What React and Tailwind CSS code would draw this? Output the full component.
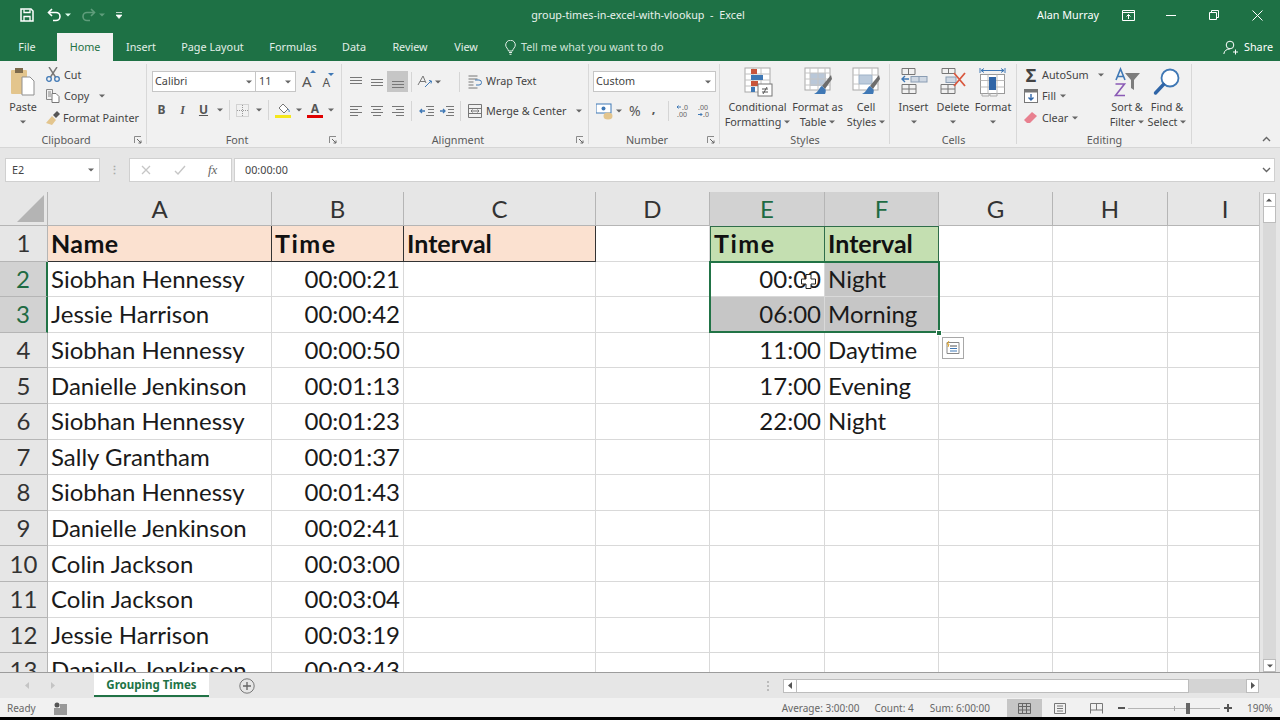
import React from "react";

const Caret = ({ c = "#666", className = "" }) => (
  <svg width="6" height="4" viewBox="0 0 6 4" className={className}><path d="M0 0.5h6L3 3.5z" fill={c} /></svg>
);

const Launcher = () => (
  <svg width="8" height="8" viewBox="0 0 8 8"><path d="M0.5 7V0.5H7" fill="none" stroke="#8a8a8a" /><path d="M3 3l4 4M7 4.5V7H4.5" fill="none" stroke="#666" /></svg>
);

const Sep = ({ h = "h-[20px]" }) => <div className={`w-px ${h} bg-[#d5d5d5]`} />;

const Group = ({ w, label, launcher, children, pad = "" }) => (
  <div className={`${w} shrink-0 h-[86px] flex flex-col relative`}>
    <div className={`h-[71px] flex ${pad}`}>{children}</div>
    <div className={`h-[15px] pt-[1px] flex items-center justify-center text-[10.8px] leading-none text-[#5a5a5a] relative ${launcher ? "pr-[15px]" : ""}`}>
      {label}
      {launcher && <span className="absolute right-[5px] top-[4px] flex"><Launcher /></span>}
    </div>
    <div className="absolute right-0 top-[3px] bottom-[3px] w-px bg-[#d8d8d8]" />
  </div>
);

const Big = ({ w, icon, l1, l2, caretOnly, caret2 }) => (
  <div className={`${w} shrink-0 flex flex-col items-center`}>
    <div className="h-[38px] pt-[6px] flex justify-center">{icon}</div>
    <div className="h-[15px] leading-[15px] whitespace-nowrap">{l1}</div>
    <div className="h-[15px] flex items-center justify-center gap-[3px] whitespace-nowrap">
      {l2 && <span className="leading-[15px]">{l2}</span>}
      {(caretOnly || caret2) && <Caret />}
    </div>
  </div>
);

const Lines = ({ ws, h = 3 }) => (
  <svg width="14" height="12" viewBox="0 0 14 12">
    {ws.map((x, i) => <path key={i} d={`M${x[0]} ${i * h + 1.5}H${x[1]}`} stroke="#777" strokeWidth="1" />)}
  </svg>
);

const CondIcon = () => (
  <svg width="30" height="30" viewBox="0 0 30 30">
    <rect x="2" y="1" width="25" height="24" fill="#fff" stroke="#a9a9a9" />
    <path d="M2 7h25M2 13h25M2 19h25M10 1v24M18 1v24" stroke="#c0c0c0" />
    <rect x="8" y="2" width="6" height="5" fill="#c9553b" /><rect x="8" y="8" width="12" height="5" fill="#3f78b5" />
    <rect x="8" y="14" width="7" height="5" fill="#c9553b" /><rect x="8" y="20" width="4" height="5" fill="#3f78b5" />
    <rect x="15" y="17" width="14" height="12" fill="#fff" stroke="#777" />
    <path d="M19 22h6M19 25h6M24 20l-4 7" stroke="#555" />
  </svg>
);
const TableIcon = () => (
  <svg width="30" height="30" viewBox="0 0 30 30">
    <rect x="2" y="1" width="25" height="22" fill="#fff" stroke="#a9a9a9" />
    <rect x="7" y="6" width="16" height="13" fill="#b9c7d8" />
    <path d="M2 6h25M2 12h25M2 18h25M7 1v22M15 1v22M22 1v22" stroke="#c4c4c4" />
    <path d="M28 8l-9 11 3 3 7-10z" fill="#6d6d6d" /><path d="M19 19c-3 1-3 6-8 8h11c1-2 1-5 0-5z" fill="#3f78b5" />
  </svg>
);
const StylesIcon = () => (
  <svg width="30" height="30" viewBox="0 0 30 30">
    <rect x="2" y="1" width="25" height="22" fill="#fff" stroke="#a9a9a9" />
    <rect x="8" y="8" width="13" height="9" fill="#bccbdc" stroke="#9fb3c8" />
    <path d="M2 8h6M21 8h6M2 17h6M21 17h6M8 1v7M21 1v7M8 17v6M21 17v6" stroke="#c4c4c4" />
    <path d="M28 8l-9 11 3 3 7-10z" fill="#6d6d6d" /><path d="M19 19c-3 1-3 6-8 8h11c1-2 1-5 0-5z" fill="#3f78b5" />
  </svg>
);
const InsertIcon = () => (
  <svg width="28" height="30" viewBox="0 0 28 30" fill="none">
    <path d="M2 1.500h13v6H2zM8.500 1.500v6M2 17.500h14v9H2zM9 17.500v9M2 22h14" stroke="#777" />
    <rect x="11" y="9.500" width="16" height="5.500" fill="#cfd8e3" stroke="#8a9db3" /><path d="M19 9.500v5.500" stroke="#8a9db3" />
    <path d="M9 12H2M5 9l-3 3 3 3" stroke="#3f78b5" strokeWidth="1.400" />
  </svg>
);
const DeleteIcon = () => (
  <svg width="30" height="30" viewBox="0 0 30 30" fill="none">
    <path d="M4 1.500h13v5H4zM10.500 1.500v5M3 17.500h14v9H3zM10 17.500v9M3 22h14" stroke="#777" />
    <rect x="8" y="10" width="10" height="5.500" fill="#cfd8e3" stroke="#8a9db3" />
    <path d="M16 6l11 13M27 6L16 19" stroke="#d9583f" strokeWidth="1.800" />
  </svg>
);
const FormatIcon = () => (
  <svg width="28" height="30" viewBox="0 0 28 30" fill="none">
    <path d="M1 1v5M26 1v5M2 3.500h23M2 3.500l3-2M2 3.500l3 2M25 3.500l-3-2M25 3.500l-3 2" stroke="#3f78b5" />
    <rect x="1.500" y="7.500" width="24" height="19" fill="#fff" stroke="#999" />
    <path d="M1.500 13.500h24M1.500 20h24M9 7.500v19M18 7.500v19" stroke="#bbb" />
    <rect x="10" y="10" width="7" height="13" fill="#2f65a7" />
    <path d="M3 26v3h7v-3M11 26v3h7v-3" stroke="#aaa" />
  </svg>
);
const SortIcon = () => (
  <svg width="30" height="32" viewBox="0 0 30 32" fill="none">
    <path d="M4 13l4.500-11L13 13M5.500 9.500h6" stroke="#3f78b5" strokeWidth="1.600" />
    <path d="M3.500 17h9l-9 11.500h9.500" stroke="#8a5ab5" strokeWidth="1.600" />
    <path d="M13 6h15l-6 7v10l-3-2v-8z" fill="#7d7d7d" />
  </svg>
);
const FindIcon = () => (
  <svg width="30" height="32" viewBox="0 0 30 32" fill="none">
    <circle cx="18" cy="11" r="8.500" stroke="#3f78b5" strokeWidth="1.800" fill="#fff" />
    <path d="M11.500 17.500L3.500 26" stroke="#2f65a7" strokeWidth="3.400" strokeLinecap="round" />
  </svg>
);

const TITLE = "font-['Noto_Sans','Open_Sans',sans-serif]";

function TitleBar() {
  return (
    <div className="h-[30px] flex items-center text-white text-[10.8px] shrink-0">
      <div className="w-[529px] flex items-center">
        <svg className="ml-[20px]" width="14" height="14" viewBox="0 0 14 14" fill="none"><path d="M1 1h10l2 2v10H1z" stroke="#fff" strokeWidth="1.500" /><path d="M4 1.500v3h6v-3M4 13V8.500h6V13" stroke="#fff" strokeWidth="1.300" /></svg>
        <svg className="ml-[13px]" width="15" height="14" viewBox="0 0 15 14" fill="none"><path d="M5 1L1.500 4.500 5 8" stroke="#fff" strokeWidth="1.600" /><path d="M2 4.500h7a4 4 0 010 8H6" stroke="#fff" strokeWidth="1.600" /></svg>
        <Caret c="#dfe" className="ml-[3px]" />
        <svg className="ml-[10px]" width="15" height="14" viewBox="0 0 15 14" fill="none"><path d="M10 1l3.500 3.500L10 8" stroke="#5f9d7b" strokeWidth="1.600" /><path d="M13 4.500H6a4 4 0 000 8h3" stroke="#5f9d7b" strokeWidth="1.600" /></svg>
        <Caret c="#5f9d7b" className="ml-[3px]" />
        <svg className="ml-[11px]" width="6" height="7" viewBox="0 0 6 7"><path d="M0 .5h6M0 3h6L3 6.500 0 3z" stroke="#fff" strokeWidth=".7" fill="#fff" /></svg>
      </div>
      <div className="w-[218px] flex justify-center whitespace-nowrap text-[#e8f2ec]">group-times-in-excel-with-vlookup&nbsp; -&nbsp; Excel</div>
      <div className="flex-1 flex items-center justify-end">
        <span className="mr-[23px] whitespace-nowrap">Alan Murray</span>
        <svg className="mr-[31px]" width="13" height="11" viewBox="0 0 13 11" fill="none"><path d="M.5.500h12v10H.5zM.5 2.500h12M6.500 9V4.500M4.500 6.500l2-2 2 2" stroke="#fff" /></svg>
        <div className="w-[10px] h-px bg-white mr-[33px]" />
        <svg className="mr-[33px]" width="10" height="10" viewBox="0 0 10 10" fill="none"><path d="M.5 2.500h7v7h-7zM2.500 2.500v-2h7v7h-2" stroke="#fff" /></svg>
        <svg className="mr-[17px]" width="11" height="11" viewBox="0 0 11 11" fill="none"><path d="M.5.500l10 10M10.500.500l-10 10" stroke="#fff" /></svg>
      </div>
    </div>
  );
}

function TabBar() {
  const tabs = [["Insert", "w-[56px]"], ["Page Layout", "w-[87px]"], ["Formulas", "w-[74px]"], ["Data", "w-[48px]"], ["Review", "w-[64px]"], ["View", "w-[48px]"]];
  return (
    <div className="h-[31px] flex text-[10.8px] text-[#e3efe8] shrink-0">
      <div className="w-[57px] pt-[3px] pr-[3px] flex items-center justify-center">File</div>
      <div className="w-[56px] mt-[3px] bg-[#f1f1f1] text-[#1e7145] flex items-center justify-center">Home</div>
      {tabs.map(([t, w]) => (
        <div key={t} className={`${w} pt-[3px] flex items-center justify-center whitespace-nowrap`}>{t}</div>
      ))}
      <div className="ml-[15px] pt-[3px] flex items-center gap-[5px] text-[#cfe3d8]">
        <svg width="11" height="15" viewBox="0 0 11 15" fill="none"><path d="M3.500 11C3 8.500.7 7.500.7 5a4.800 4.800 0 019.600 0c0 2.500-2.300 3.500-2.800 6zM4 12.500h3M4.500 14.300h2" stroke="#e3efe8" /></svg>
        <span className="whitespace-nowrap">Tell me what you want to do</span>
      </div>
      <div className="flex-1 pt-[3px] flex items-center justify-end gap-[6px] pr-[7px] text-white">
        <svg width="15" height="15" viewBox="0 0 15 15" fill="none"><circle cx="7" cy="5" r="3.800" stroke="#fff" /><path d="M.8 14c.5-3.500 3-5 6-5M10 12h5M12.500 9.500v5" stroke="#fff" /></svg>
        <span>Share</span>
      </div>
    </div>
  );
}

function Ribbon() {
  return (
    <div className="h-[86px] bg-[#f1f1f1] flex text-[10.8px] text-[#444] shrink-0 relative">
      <Group w="w-[147px]" label="Clipboard" launcher>
        <div className="w-[46px] flex flex-col items-center">
          <div className="h-[38px] pt-[6px]">
            <svg width="24" height="30" viewBox="0 0 24 30">
              <rect x="0" y="3" width="16" height="24" rx="1" fill="#e3c58d" /><rect x="4" y="1" width="8" height="5" fill="#7d6a4c" />
              <path d="M11 10h8l4 4v14H11z" fill="#fff" stroke="#8f8f8f" />
            </svg>
          </div>
          <div className="h-[15px] leading-[15px]">Paste</div>
          <div className="h-[15px] flex items-center"><Caret /></div>
        </div>
        <div className="flex-1 pt-[3px] flex flex-col">
          <div className="h-[21.5px] flex items-center gap-[4px]">
            <svg width="14" height="15" viewBox="0 0 14 15" fill="none"><path d="M3 0l6.500 10M11 0L4.500 10" stroke="#777" strokeWidth="1.400" /><circle cx="3" cy="12" r="2.300" stroke="#3f78b5" strokeWidth="1.300" /><circle cx="11" cy="12" r="2.300" stroke="#3f78b5" strokeWidth="1.300" /></svg>
            <span>Cut</span>
          </div>
          <div className="h-[21.5px] flex items-center gap-[4px]">
            <svg width="14" height="14" viewBox="0 0 14 14" fill="none"><path d="M.5.500h6v10h-6zM2 3h3M2 5h3M2 7h3" stroke="#888" /><path d="M6 4.500h4l3 3v6H6z" fill="#fff" stroke="#777" /></svg>
            <span>Copy</span><Caret className="ml-[6px]" />
          </div>
          <div className="h-[21.5px] flex items-center gap-[3px]">
            <svg width="14" height="14" viewBox="0 0 14 14"><path d="M0 12l6-7 4 4-4 5z" fill="#e3c58d" /><path d="M7 4l4-4 3 3-4 4z" fill="#555" /></svg>
            <span className="whitespace-nowrap">Format Painter</span>
          </div>
        </div>
      </Group>

      <Group w="w-[195px]" label="Font" launcher pad="pl-[5px] pt-[10px] flex-col">
        <div className="flex h-[22px]">
          <div className="w-[104px] h-[21px] bg-white border border-[#c6c6c6] flex items-center justify-between px-[2px] pr-[3px]"><span>Calibri</span><Caret /></div>
          <div className="w-[40px] h-[21px] bg-white border border-l-0 border-[#c6c6c6] flex items-center justify-between px-[3px] pr-[4px]"><span>11</span><Caret /></div>
          <span className="ml-[6px] text-[15px] leading-[20px] text-[#555] relative">A<span className="absolute -right-[4px] -top-[1px] w-0 h-0 border-x-[3px] border-x-transparent border-b-[3px] border-b-[#3f78b5]" /></span>
          <span className="ml-[11px] text-[12px] leading-[23px] text-[#555] relative">A<span className="absolute -right-[4px] top-[2px] w-0 h-0 border-x-[3px] border-x-transparent border-t-[3px] border-t-[#3f78b5]" /></span>
        </div>
        <div className="flex items-center h-[20px] mt-[7px]">
          <span className="w-[21px] -ml-[1px] text-center font-bold text-[#555] text-[12px]">B</span>
          <span className="w-[21px] text-center italic font-bold text-[#555] text-[12px] font-['Liberation_Serif',serif]">I</span>
          <span className="w-[21px] text-center underline font-bold text-[#555] text-[12px]">U</span>
          <Caret className="ml-[3px]" />
          <div className="ml-[6px]"><Sep /></div>
          <svg className="ml-[6px]" width="13" height="13" viewBox="0 0 13 13" fill="none"><path d="M.5.500h12v12H.5z" stroke="#b5b5b5" strokeDasharray="1 1" /><path d="M6.500 1v11M1 6.500h11" stroke="#999" strokeDasharray="1 1" /></svg>
          <Caret className="ml-[7px]" />
          <div className="ml-[6px]"><Sep /></div>
          <div className="ml-[6px] w-[16px] flex flex-col items-center">
            <svg width="13" height="11" viewBox="0 0 13 11" fill="none"><path d="M6 1l5 5-4 4-5-5z" stroke="#777" fill="#fff" /><path d="M11 6c1 1 1.500 2 1 3" stroke="#3f78b5" /></svg>
            <div className="w-[16px] h-[3px] bg-[#f4e71c] mt-[1px]" />
          </div>
          <Caret className="ml-[5px]" />
          <div className="ml-[5px] w-[16px] flex flex-col items-center">
            <span className="text-[12px] leading-[11px] font-bold text-[#555]">A</span>
            <div className="w-[16px] h-[3px] bg-[#e00000] mt-[1px]" />
          </div>
          <Caret className="ml-[5px]" />
        </div>
      </Group>

      <Group w="w-[247px]" label="Alignment" launcher pad="pl-[3px] pt-[10px] flex-col">
        <div className="flex items-center h-[21px]">
          <div className="w-[21px] flex justify-center"><Lines ws={[[1, 13], [1, 13], [1, 13]]} /></div>
          <div className="w-[21px] flex justify-center pt-[4px]"><Lines ws={[[1, 13], [1, 13], [1, 13]]} /></div>
          <div className="w-[21px] h-[21px] bg-[#c6c6c6] flex items-end justify-center"><Lines ws={[[1, 13], [1, 13], [1, 13]]} /></div>
          <div className="ml-[3px]"><Sep /></div>
          <svg className="ml-[5px]" width="15" height="13" viewBox="0 0 15 13" fill="none"><path d="M1 10l5-9 3 7M3 6.500h5" stroke="#777" /><path d="M8 12l6-6M12 5.500l2.500.500-.500 2.500" stroke="#3f78b5" /></svg>
          <Caret className="ml-[3px]" />
          <div className="ml-[18px]"><Sep /></div>
          <svg className="ml-[8px]" width="14" height="14" viewBox="0 0 14 14" fill="none"><path d="M.5 1h9M.5 4h9M.5 7h5M.5 10h5M.5 13h9" stroke="#777" /><path d="M8 10h3a2 2 0 000-5H7" stroke="#3f78b5" /></svg>
          <span className="ml-[4px] whitespace-nowrap">Wrap Text</span>
        </div>
        <div className="flex items-center h-[20px] mt-[9px]">
          <div className="w-[21px] flex justify-center"><Lines ws={[[1, 13], [1, 9], [1, 13], [1, 9]]} /></div>
          <div className="w-[21px] flex justify-center"><Lines ws={[[1, 13], [3, 11], [1, 13], [3, 11]]} /></div>
          <div className="w-[21px] flex justify-center"><Lines ws={[[1, 13], [5, 13], [1, 13], [5, 13]]} /></div>
          <div className="ml-[3px]"><Sep /></div>
          <svg className="ml-[7px]" width="15" height="12" viewBox="0 0 15 12" fill="none"><path d="M7 1.500h8M9 4.500h6M9 7.500h6M7 10.500h8" stroke="#777" /><path d="M6 6H1M3 4L1 6l2 2" stroke="#3f78b5" strokeWidth="1.300" /></svg>
          <svg className="ml-[5px]" width="15" height="12" viewBox="0 0 15 12" fill="none"><path d="M7 1.500h8M9 4.500h6M9 7.500h6M7 10.500h8" stroke="#777" /><path d="M1 6h5M4 4l2 2-2 2" stroke="#3f78b5" strokeWidth="1.300" /></svg>
          <div className="ml-[6px]"><Sep /></div>
          <svg className="ml-[7px]" width="14" height="14" viewBox="0 0 14 14" fill="none"><path d="M.5.500h13v13H.5zM.5 4.500h13M.5 9.500h13M3 7h8M3 7l1.500-1.500M3 7l1.500 1.500M11 7L9.500 5.500M11 7L9.500 8.500" stroke="#777" /></svg>
          <span className="ml-[4px] whitespace-nowrap">Merge &amp; Center</span>
          <Caret className="ml-[9px]" />
        </div>
      </Group>

      <Group w="w-[131px]" label="Number" launcher pad="pl-[4px] pt-[10px] flex-col">
        <div className="w-[123px] h-[21px] bg-white border border-[#c6c6c6] flex items-center justify-between px-[2px] pr-[4px]"><span>Custom</span><Caret /></div>
        <div className="flex items-center h-[20px] mt-[9px]">
          <svg className="ml-[3px]" width="17" height="17" viewBox="0 0 17 17"><rect x="0" y="1" width="15" height="9" fill="#fff" stroke="#3f78b5" /><circle cx="7.500" cy="5.500" r="2" fill="#3f78b5" /><ellipse cx="12" cy="13" rx="4.500" ry="3.500" fill="#e3c58d" /></svg>
          <Caret className="ml-[3px]" />
          <span className="ml-[7px] text-[14px] leading-none text-[#555]">%</span>
          <span className="ml-[11px] font-bold text-[13px] leading-none text-[#555] -mt-[5px]">,</span>
          <div className="ml-[13px]"><Sep /></div>
          <svg className="ml-[7px]" width="13" height="14" viewBox="0 0 13 14" fill="none">
            <path d="M5 3H1M2.500 1.500L1 3l1.500 1.500" stroke="#3f78b5" />
            <text x="6" y="6" fontSize="7" fill="#666">.0</text>
            <text x="1" y="13" fontSize="7" fill="#666">.00</text>
          </svg>
          <svg className="ml-[8px]" width="13" height="14" viewBox="0 0 13 14" fill="none">
            <text x="1" y="6" fontSize="7" fill="#666">.00</text>
            <path d="M1 10.500h4M3.500 9L5 10.500 3.500 12" stroke="#3f78b5" />
            <text x="6" y="13" fontSize="7" fill="#666">.0</text>
          </svg>
        </div>
      </Group>

      <Group w="w-[170px]" label="Styles" pad="pl-[4px]">
        <Big w="w-[67px]" icon={<CondIcon />} l1="Conditional" l2="Formatting" caret2 />
        <Big w="w-[53px]" icon={<TableIcon />} l1="Format as" l2="Table" caret2 />
        <Big w="w-[44px]" icon={<StylesIcon />} l1="Cell" l2="Styles" caret2 />
      </Group>

      <Group w="w-[127px]" label="Cells" pad="pl-[4px]">
        <Big w="w-[39px]" icon={<InsertIcon />} l1="Insert" caretOnly />
        <Big w="w-[40px]" icon={<DeleteIcon />} l1="Delete" caretOnly />
        <Big w="w-[40px]" icon={<FormatIcon />} l1="Format" caretOnly />
      </Group>

      <Group w="w-[175px]" label="Editing" pad="pl-[7px]">
        <div className="w-[84px] pt-[3px] flex flex-col">
          <div className="h-[21.5px] flex items-center gap-[4px]">
            <span className="w-[14px] text-[18px] leading-none text-[#444] font-bold text-center">Σ</span>
            <span>AutoSum</span><Caret className="ml-[5px]" />
          </div>
          <div className="h-[21.5px] flex items-center gap-[4px]">
            <svg width="14" height="14" viewBox="0 0 14 14" fill="none"><rect x=".5" y=".5" width="13" height="13" fill="#fff" stroke="#777" /><rect x=".5" y=".5" width="13" height="3" fill="#777" /><path d="M7 5v6M4.500 8.500L7 11l2.500-2.500" stroke="#2f65a7" strokeWidth="1.400" /></svg>
            <span>Fill</span><Caret />
          </div>
          <div className="h-[21.5px] flex items-center gap-[4px]">
            <svg width="14" height="13" viewBox="0 0 14 13"><path d="M0 9l8-8 5 4-7 7H3z" fill="#e8808f" /></svg>
            <span>Clear</span><Caret />
          </div>
        </div>
        <Big w="w-[38px]" icon={<SortIcon />} l1="Sort &amp;" l2="Filter" caret2 />
        <Big w="w-[42px]" icon={<FindIcon />} l1="Find &amp;" l2="Select" caret2 />
      </Group>

      <svg className="absolute right-[9px] bottom-[5px]" width="9" height="6" viewBox="0 0 9 6" fill="none"><path d="M1 5l3.500-3.500L8 5" stroke="#666" strokeWidth="1.400" /></svg>
    </div>
  );
}

function FormulaBar() {
  return (
    <div className="h-[45px] bg-[#e6e6e6] border-t border-[#d6d6d6] pt-[10px] pl-[5px] pr-[5px] flex text-[10.8px] text-[#444] shrink-0">
      <div className="w-[95px] h-[24px] bg-white border border-[#d0d0d0] flex items-center justify-between pl-[6px] pr-[5px]"><span>E2</span><Caret /></div>
      <div className="w-[29px] flex justify-center items-center h-[24px] text-[#aaa] font-bold leading-none">⋮</div>
      <div className="w-[103px] h-[24px] bg-white border border-[#d0d0d0] flex items-center">
        <svg className="ml-[11px]" width="10" height="10" viewBox="0 0 10 10" fill="none"><path d="M1 1l8 8M9 1L1 9" stroke="#c6c6c6" strokeWidth="1.300" /></svg>
        <svg className="ml-[23px]" width="12" height="10" viewBox="0 0 12 10" fill="none"><path d="M1 6l3 3 7-8" stroke="#c6c6c6" strokeWidth="1.400" /></svg>
        <span className="ml-[22px] italic text-[13px] font-['Liberation_Serif',serif] text-[#666]">fx</span>
      </div>
      <div className="ml-[2px] flex-1 h-[24px] bg-white border border-[#d0d0d0] flex items-center justify-between pl-[10px] pr-[3px]">
        <span>00:00:00</span>
        <svg width="9" height="6" viewBox="0 0 9 6" fill="none"><path d="M1 1l3.500 3.500L8 1" stroke="#666" strokeWidth="1.400" /></svg>
      </div>
    </div>
  );
}

const ROWS = [
  ["Siobhan Hennessy", "00:00:21", "00:00", "Night"],
  ["Jessie Harrison", "00:00:42", "06:00", "Morning"],
  ["Siobhan Hennessy", "00:00:50", "11:00", "Daytime"],
  ["Danielle Jenkinson", "00:01:13", "17:00", "Evening"],
  ["Siobhan Hennessy", "00:01:23", "22:00", "Night"],
  ["Sally Grantham", "00:01:37"],
  ["Siobhan Hennessy", "00:01:43"],
  ["Danielle Jenkinson", "00:02:41"],
  ["Colin Jackson", "00:03:00"],
  ["Colin Jackson", "00:03:04"],
  ["Jessie Harrison", "00:03:19"],
  ["Danielle Jenkinson", "00:03:43"],
];

const COLS = ["A", "B", "C", "D", "E", "F", "G", "H", "I"];
const TXT = "flex items-center whitespace-nowrap overflow-hidden px-[3px] text-[#1a1a1a]";
const BOLD = "flex items-center whitespace-nowrap overflow-hidden px-[3px] text-[#111] font-bold text-[25px]";
const PLAIN = "border-r border-b border-[#d9d9d9]";

function Sheet() {
  return (
    <div className="h-[481px] flex border-b border-[#9c9c9c] bg-white shrink-0">
      <div className="w-[1260px] relative overflow-hidden border-r border-[#c4c4c4]">
        <div className="grid grid-cols-[48px_224px_132px_192px_114px_115px_114px_114px_115px_115px] grid-rows-[34px] auto-rows-[35.6px] text-[24px] font-['Lato','Liberation_Sans',sans-serif]">
          <div className="bg-[#e6e6e6] border-r border-b border-[#b5b5b5] flex items-end justify-end pr-[3px] pb-[3px]">
            <div className="w-0 h-0 border-l-[27px] border-l-transparent border-b-[27px] border-b-[#b4b4b4]" />
          </div>
          {COLS.map((c) => {
            const sel = c === "E" || c === "F";
            return (
              <div key={c} className={sel
                ? "bg-[#d2d2d2] text-[#1e6b43] border-r border-[#b5b5b5] flex items-center justify-center"
                : "bg-[#e6e6e6] text-[#333] border-r border-b border-[#b5b5b5] flex items-center justify-center"}>{c}</div>
            );
          })}

          <div className="bg-[#e6e6e6] border-r border-b border-[#b5b5b5] text-[#333] flex items-center justify-center">1</div>
          <div className={`${BOLD} bg-[#fbe1d0] border-r border-b border-[#333]`}><span className="tracking-[0.4px]">Name</span></div>
          <div className={`${BOLD} bg-[#fbe1d0] border-r border-b border-[#333]`}><span className="tracking-[1.5px]">Time</span></div>
          <div className={`${BOLD} bg-[#fbe1d0] border-r border-b border-[#333]`}>Interval</div>
          <div className={PLAIN} />
          <div className={`${BOLD} bg-[#c4dfb1] border border-[#2f6d4a]`}><span className="tracking-[1.5px]">Time</span></div>
          <div className={`${BOLD} bg-[#c4dfb1] border border-l-0 border-[#2f6d4a]`}>Interval</div>
          <div className={PLAIN} /><div className={PLAIN} /><div className={PLAIN} />

          {ROWS.map((r, i) => {
            const n = i + 2;
            const sel = n === 2 || n === 3;
            return (
              <React.Fragment key={n}>
                <div className={sel
                  ? "bg-[#d2d2d2] text-[#1e6b43] border-r-2 border-b border-r-[#217346] border-b-[#b5b5b5] flex items-center justify-center"
                  : "bg-[#e6e6e6] text-[#333] border-r border-b border-[#b5b5b5] flex items-center justify-center"}>{n}</div>
                <div className={`${TXT} ${PLAIN}`}>{r[0]}</div>
                <div className={`${TXT} ${PLAIN} justify-end`}>{r[1]}</div>
                <div className={PLAIN} /><div className={PLAIN} />
                <div className={`${TXT} ${PLAIN} justify-end ${n === 3 ? "bg-[#c6c6c6]" : ""}`}>{r[2]}</div>
                <div className={`${TXT} ${PLAIN} ${sel ? "bg-[#c6c6c6]" : ""}`}>{r[3]}</div>
                <div className={PLAIN} /><div className={PLAIN} /><div className={PLAIN} />
              </React.Fragment>
            );
          })}
        </div>

        <div className="absolute left-[709px] top-[69px] w-[231px] h-[72px] border-2 border-[#217346]" />
        <div className="absolute left-[936px] top-[138px] w-[6px] h-[6px] bg-[#217346] border border-white" />
        <svg className="absolute left-[801px] top-[82px]" width="15" height="15" viewBox="0 0 15 15"><path d="M5 .5h5v4.500h4.500v5H10v4.500H5V10H.5V5H5z" fill="#fff" stroke="#222" /></svg>
        <div className="absolute left-[942px] top-[145px] w-[22px] h-[22px] bg-white border border-[#a8a8a8] flex items-center justify-center">
          <svg width="14" height="14" viewBox="0 0 14 14" fill="none"><path d="M1 1.500h12v11H1z" stroke="#888" fill="#fff" /><path d="M4 5h7" stroke="#555" /><path d="M4 7.500h7" stroke="#3f78b5" /><path d="M4 10h7" stroke="#3f78b5" /><path d="M3 0L1 3h2L2 6" stroke="#e0a52a" /></svg>
        </div>
      </div>
      <div className="w-[20px] bg-[#e6e6e6] flex flex-col items-center pr-[1px] pt-px">
        <div className="w-[13px] h-[14px] bg-white border border-[#bdbdbd] flex items-center justify-center rotate-180"><Caret c="#555" /></div>
        <div className="w-[13px] h-[16px] bg-white border border-t-0 border-[#bdbdbd]" />
        <div className="w-[13px] flex-1 bg-[#d9d9d9]" />
        <div className="w-[13px] h-[13px] bg-white border border-[#bdbdbd] flex items-center justify-center"><Caret c="#555" /></div>
      </div>
    </div>
  );
}

function SheetTabs() {
  return (
    <div className="h-[25px] bg-[#e6e6e6] flex shrink-0 text-[12px]">
      <div className="w-[94px] flex items-center pl-[25px] gap-[22px]">
        <svg width="4" height="7" viewBox="0 0 4 7"><path d="M4 0v7L0 3.500z" fill="#c4c4c4" /></svg>
        <svg width="4" height="7" viewBox="0 0 4 7"><path d="M0 0v7l4-3.500z" fill="#c4c4c4" /></svg>
      </div>
      <div className="w-[115px] h-[24px] pt-[1px] bg-white border-b-2 border-[#217346] flex items-center justify-center font-bold text-[#217346] whitespace-nowrap text-[11.5px]">Grouping Times</div>
      <svg className="ml-[30px] mt-[5px]" width="16" height="16" viewBox="0 0 16 16" fill="none"><circle cx="8" cy="8" r="7.200" stroke="#777" /><path d="M4 8h8M8 4v8" stroke="#666" strokeWidth="1.300" /></svg>
      <div className="flex-1 flex items-center justify-end pr-[21px]">
        <div className="mr-[14px] flex flex-col gap-[2px]">
          <div className="w-[2px] h-[2px] bg-[#bbb]" /><div className="w-[2px] h-[2px] bg-[#bbb]" /><div className="w-[2px] h-[2px] bg-[#bbb]" />
        </div>
        <div className="w-[14px] h-[14px] bg-white border border-[#bdbdbd] flex items-center justify-center">
          <svg width="4" height="7" viewBox="0 0 4 7"><path d="M4 0v7L0 3.500z" fill="#555" /></svg>
        </div>
        <div className="w-[392px] h-[14px] bg-white border-y border-r border-[#bdbdbd]" />
        <div className="w-[57px] h-[14px] bg-[#d4d4d4]" />
        <div className="w-[13px] h-[14px] bg-white border border-[#bdbdbd] flex items-center justify-center">
          <svg width="4" height="7" viewBox="0 0 4 7"><path d="M0 0v7l4-3.500z" fill="#555" /></svg>
        </div>
      </div>
    </div>
  );
}

function StatusBar() {
  return (
    <div className="h-[19px] pt-[1px] bg-[#f1f1f1] flex items-center text-[10px] text-[#666] shrink-0 whitespace-nowrap">
      <span className="ml-[7px] w-[47px]">Ready</span>
      <svg width="13" height="13" viewBox="0 0 13 13"><circle cx="3" cy="3" r="2.500" fill="#555" /><rect x="6" y="2" width="7" height="11" fill="#999" /><rect x="0" y="6" width="6" height="7" fill="#999" /></svg>
      <div className="flex-1 flex justify-end">
        <span>Average: 3:00:00</span>
        <span className="ml-[15px]">Count: 4</span>
        <span className="ml-[16px]">Sum: 6:00:00</span>
      </div>
      <div className="ml-[17px] w-[35px] h-[19px] bg-[#c6c6c6] flex items-center justify-center">
        <svg width="13" height="11" viewBox="0 0 13 11" fill="none"><path d="M.5.500h12v10H.5zM.5 3.500h12M.5 7h12M4.500.5v10M8.500.5v10" stroke="#666" /></svg>
      </div>
      <div className="w-[36px] flex justify-center">
        <svg width="12" height="11" viewBox="0 0 12 11" fill="none"><path d="M.5.500h11v10H.5zM3 3h6M3 5.500h6M3 8h6" stroke="#777" /></svg>
      </div>
      <div className="w-[36px] flex justify-center">
        <svg width="13" height="11" viewBox="0 0 13 11" fill="none"><path d="M.5 10.500v-10h12v10M.5 7h12M6.500.5V7" stroke="#777" /></svg>
      </div>
      <div className="ml-[4px] w-[7px] h-[2px] bg-[#555]" />
      <div className="ml-[3px] w-[92px] h-px bg-[#b5b5b5] relative">
        <div className="absolute left-[46px] -top-[2px] w-px h-[5px] bg-[#aaa]" />
        <div className="absolute left-[58px] -top-[5px] w-[4px] h-[11px] bg-[#666]" />
      </div>
      <span className="ml-[4px] w-[8px] h-[8px] relative">
        <span className="absolute left-0 top-[3px] w-[8px] h-[2px] bg-[#555]" />
        <span className="absolute left-[3px] top-0 w-[2px] h-[8px] bg-[#555]" />
      </span>
      <span className="ml-[15px] w-[33px]">190%</span>
    </div>
  );
}

export default function App() {
  return (
    <div className={`w-[1280px] h-[720px] overflow-hidden flex flex-col bg-[#1e7145] ${TITLE}`}>
      <TitleBar />
      <TabBar />
      <Ribbon />
      <FormulaBar />
      <Sheet />
      <SheetTabs />
      <StatusBar />
      <div className="flex-1 bg-black" />
    </div>
  );
}
